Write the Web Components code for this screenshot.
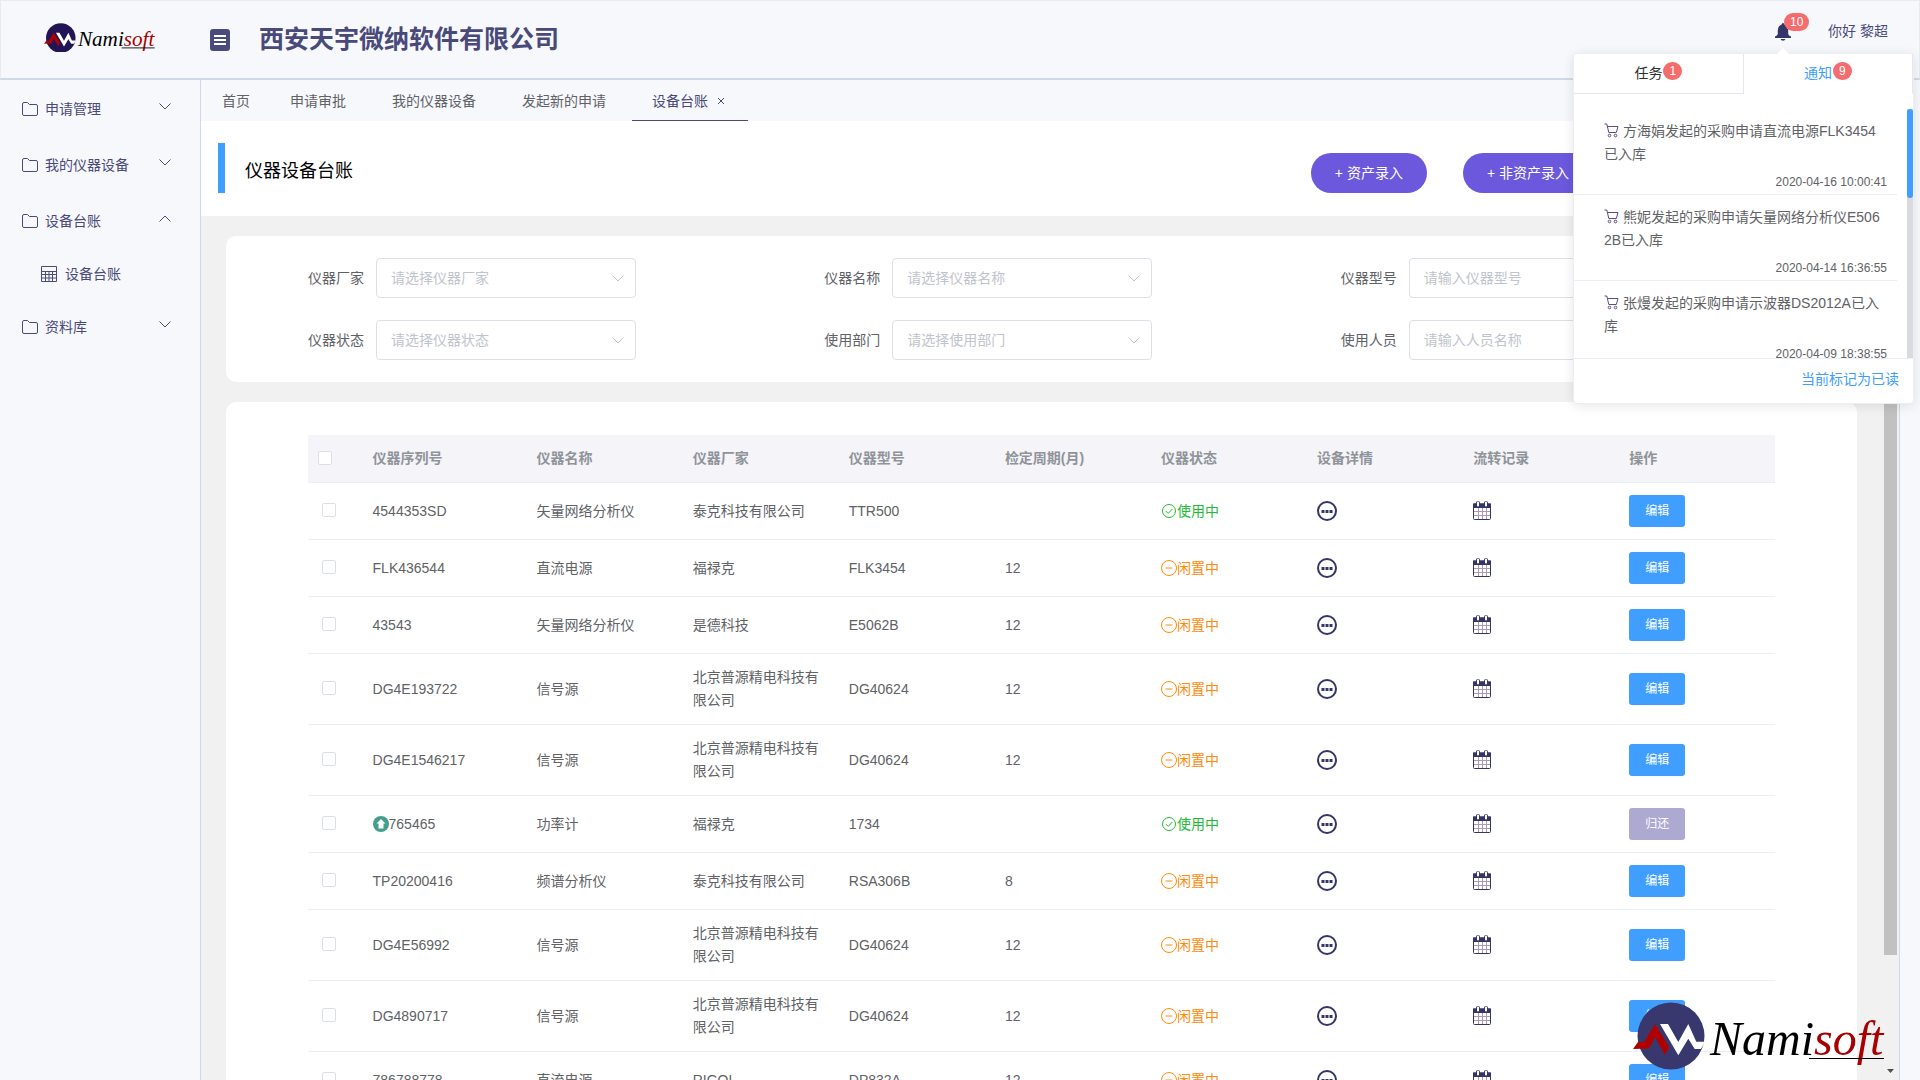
<!DOCTYPE html>
<html lang="zh-CN">
<head>
<meta charset="utf-8">
<title>仪器设备台账</title>
<style>
    body {
        margin: 0;
        height: 100vh;
        overflow: hidden;
        background: #f7f8fc;
        color: #606266;
        font: 14px/23px "Liberation Sans", Arial, "Noto Sans CJK SC", sans-serif;
    }
</style>
</head>
<body>

<app-shell>
    <app-header slot="header" company="西安天宇微纳软件有限公司" user="你好 黎超"></app-header>
    <side-menu slot="menu"></side-menu>
    <page-tabs slot="tabs"></page-tabs>
    <page-title heading="仪器设备台账">
        <pill-button>+ 资产录入</pill-button>
        <pill-button>+ 非资产录入</pill-button>
    </page-title>
    <panel-card>
        <filter-form></filter-form>
    </panel-card>
    <panel-card>
        <device-table></device-table>
    </panel-card>
    <nami-logo slot="mark" class="mark"></nami-logo>
</app-shell>

<script>
const icons = {
    folder: '<svg width="16" height="14" viewBox="0 0 16 14" fill="none" stroke="currentColor"><path d="M.5 12V2Q.5.5 2 .5H5.5L7.5 2.500H14Q15.500 2.500 15.500 4V12Q15.500 13.500 14 13.500H2Q.5 13.500.5 12Z"/></svg>',
    sheet: '<svg width="16" height="16" viewBox="0 0 16 16" fill="none" stroke="currentColor"><path d="M.5.5H15.500V15.500H.5ZM.5 5.500H15.500M.5 8.500H15.500M.5 12H15.500M4.500 5.500V15.500M8 5.500V15.500M11.500 5.500V15.500"/></svg>',
    down: '<svg width="12" height="7" viewBox="0 0 12 7" fill="none" stroke="currentColor"><path d="M.5.5 6 6 11.500.5"/></svg>',
    up: '<svg width="12" height="7" viewBox="0 0 12 7" fill="none" stroke="currentColor"><path d="M.5 6.500 6 1 11.500 6.500"/></svg>',
    menu: '<svg width="20" height="22" viewBox="0 0 20 22"><rect width="20" height="22" rx="3" fill="#4a4b7c"/><path d="M4 7H16M4 11H16M4 15H16" stroke="#fff" stroke-width="2"/></svg>',
    bell: '<svg width="16" height="18" viewBox="0 0 16 18" fill="#34356b"><path d="M8 0Q9.300 0 9.300 1.500 13 2.600 13.200 7V11Q13.500 12.500 16 13.500V15H0V13.500Q2.500 12.500 2.800 11V7Q3 2.600 6.700 1.500 6.700 0 8 0ZM5.500 16H10.500Q9.800 17.800 8 17.800 6.200 17.800 5.500 16Z"/></svg>',
    cart: '<svg width="15" height="15" viewBox="0 0 15 15" fill="none" stroke="#5d4a86"><path d="M.5 1H2.800L4.800 9.500H12.300L14 3.500H3.500"/><circle cx="5.500" cy="12.500" r="1.300"/><circle cx="11.500" cy="12.500" r="1.300"/></svg>',
    ok: '<svg width="16" height="16" viewBox="0 0 16 16" fill="none" stroke="currentColor"><circle cx="8" cy="8" r="6.500"/><path d="M4.800 8 7.200 10.400 11.400 6"/></svg>',
    idle: '<svg width="16" height="16" viewBox="0 0 16 16" fill="none" stroke="currentColor"><circle cx="8" cy="8" r="7.500"/><path d="M4.500 8H11.500"/></svg>',
    more: '<svg width="20" height="20" viewBox="0 0 20 20"><circle cx="10" cy="10" r="9" fill="#fff" stroke="#34356b" stroke-width="2"/><path d="M4.500 10.500H15.500" stroke="#34356b" stroke-width="3" stroke-dasharray="3 1"/></svg>',
    calendar: '<svg width="18" height="20" viewBox="0 0 18 20" fill="none" stroke="#34356b"><path d="M.5 3H17.500V17.500Q17.500 18.500 16.500 18.500H1.500Q.5 18.500.5 17.500Z" fill="#fff"/><path d="M0 2.500H18V7H0Z" fill="#34356b" stroke="none"/><path d="M1 10.500H17M1 14.500H17M5.500 7V18M9.500 7V18M13.500 7V18" stroke="#a99bb5"/><path d="M5 2V4.500M13 2V4.500" stroke-width="4" stroke-linecap="round"/><path d="M5 1.500V4.500M13 1.500V4.500" stroke="#fff" stroke-width="2" stroke-linecap="round"/></svg>',
    rise: '<svg width="16" height="16" viewBox="0 0 16 16"><circle cx="8" cy="8" r="8" fill="#439e8b"/><path d="M8 3 12.500 7.500H10.500V12.500H5.500V7.500H3.500Z" fill="#fff"/></svg>'
};

// shared base: clones a template into an open shadow root
class BaseElement extends HTMLElement {
    constructor() {
        super();
        this.attachShadow({ mode: 'open' });
    }

    connectedCallback() {
        const template = document.createElement('template');
        template.innerHTML = this.render();
        this.shadowRoot.replaceChildren(template.content.cloneNode(true));
    }
}

class AppShell extends BaseElement {
    render() {
        return `
<style>
    :host {
        display: grid;
        grid-template: auto 1fr / 200px 1fr;
        height: 100vh;
        overflow: hidden;
    }
    slot[name="header"] {
        display: block;
        grid-column: 1 / -1;
    }
    .body {
        display: flex;
        flex-direction: column;
        min-width: 0;
        min-height: 0;
        margin-right: 20px;
        border: solid #d1d9e8;
        border-width: 0 1px;
    }
    .view {
        display: flex;
        flex: 1;
        min-height: 0;
        background: #f1f1f1;
    }
    .content {
        display: flex;
        flex: 1;
        flex-direction: column;
        gap: 20px;
        min-width: 0;
        overflow: hidden;
    }
    ::slotted(.mark) {
        position: fixed;
        right: 33px;
        bottom: 10px;
        width: 254px;
    }
</style>
<slot name="header"></slot>
<slot name="menu"></slot>
<div class="body">
    <slot name="tabs"></slot>
    <div class="view">
        <div class="content"><slot></slot></div>
        <scroll-rail></scroll-rail>
    </div>
</div>
<slot name="mark"></slot>`;
    }
}

class ScrollRail extends BaseElement {
    render() {
        return `
<style>
    :host {
        display: flex;
        flex-direction: column;
        align-items: center;
        width: 17px;
    }
    .thumb {
        flex: 1;
        width: 13px;
        margin-top: 17px;
        background: #c1c1c1;
    }
    .rest {
        display: flex;
        align-items: flex-end;
        height: 13%;
        padding-bottom: 7px;
        box-sizing: border-box;
    }
    svg {
        display: block;
    }
</style>
<div class="thumb"></div>
<div class="rest"><svg width="7" height="4"><path d="M0 0H7L3.500 4Z" fill="#505050"/></svg></div>`;
    }
}

class NamiLogo extends BaseElement {
    render() {
        return `
<style>
    :host {
        display: block;
    }
    svg {
        display: block;
        width: 100%;
    }
    text {
        font: italic 48px "Liberation Serif", "Times New Roman", serif;
    }
</style>
<svg viewBox="0 0 254 68" role="img" aria-label="Namisoft">
    <circle cx="38" cy="34" r="33.500" fill="var(--disc, #38386e)"/>
    <path d="M0 47 5 40H11L22 22 36 45 32 53 22 35 16 46.500Z" fill="#b00000"/>
    <path d="M27 22H35L45.300 40 55.300 22 63.300 39.700H72L68 47H61.700L55.300 36.700 45.300 53.300Z" fill="#fff"/>
    <text x="77" y="53">Nami<tspan fill="#a80000">soft</tspan></text>
    <path d="M176 56.500H251" stroke="#000" stroke-width="var(--rule, 1)"/>
</svg>`;
    }
}

class AppHeader extends BaseElement {
    render() {
        return `
<style>
    :host {
        display: flex;
        align-items: center;
        position: relative;
        height: 80px;
        box-sizing: border-box;
        padding-left: 43px;
        border: 1px solid #e6ebf5;
        border-bottom: 2px solid #d1d9e8;
        background: #f7f8fc;
        color: #494a7a;
    }
    nami-logo {
        width: 112px;
        margin-bottom: 4px;
        --disc: #231555;
        --rule: 2;
    }
    button {
        border: 0;
        padding: 0;
        background: none;
        font: inherit;
        cursor: pointer;
    }
    .toggle {
        margin: 0 29px 0 54px;
        line-height: 0;
    }
    h1 {
        flex: 1;
        margin: 0 0 2px;
        font-size: 25px;
        line-height: 36px;
    }
    .user {
        display: flex;
        align-items: center;
        gap: 37px;
        margin: 0 31px 16px 0;
    }
    .bell {
        position: relative;
        display: flex;
    }
    .bell count-badge {
        position: absolute;
        left: 9px;
        bottom: 10px;
    }
    notice-popover {
        position: absolute;
        top: 52px;
        right: 5px;
        z-index: 5;
    }
</style>
<nami-logo></nami-logo>
<button class="toggle" aria-label="折叠菜单">${icons.menu}</button>
<h1>${this.getAttribute('company')}</h1>
<div class="user">
    <button class="bell" aria-label="消息">${icons.bell}<count-badge>10</count-badge></button>
    <span>${this.getAttribute('user')}</span>
</div>
<notice-popover></notice-popover>`;
    }
}

class CountBadge extends BaseElement {
    render() {
        return `
<style>
    :host {
        display: inline-block;
        box-sizing: border-box;
        min-width: 18px;
        padding: 0 6px;
        border-radius: 9px;
        background: #f56c6c;
        color: #fff;
        font-size: 12px;
        line-height: 18px;
        text-align: center;
    }
</style>
<slot></slot>`;
    }
}

class NoticePopover extends BaseElement {
    render() {
        const notices = [
            ['方海娟发起的采购申请直流电源FLK3454已入库', '2020-04-16 10:00:41'],
            ['熊妮发起的采购申请矢量网络分析仪E5062B已入库', '2020-04-14 16:36:55'],
            ['张熳发起的采购申请示波器DS2012A已入库', '2020-04-09 18:38:55']
        ];
        return `
<style>
    :host {
        display: block;
        box-sizing: border-box;
        width: 341px;
        border: 1px solid #ebeef5;
        border-radius: 4px;
        background: #fff;
        box-shadow: 0 2px 12px rgba(0,0,0,0.1);
        color: #606266;
    }
    .arrow {
        position: absolute;
        top: -6px;
        left: 203px;
        display: block;
    }
    .tabs {
        display: flex;
    }
    .tabs button {
        display: flex;
        flex: 1;
        align-items: center;
        justify-content: center;
        height: 40px;
        padding: 0;
        border: solid #e4e7ed;
        border-width: 0 1px 1px 0;
        background: none;
        color: #303133;
        font: inherit;
    }
    .tabs button.active {
        border-bottom-color: transparent;
        color: #409eff;
    }
    .tabs count-badge {
        margin: 0 0 6px 1px;
    }
    .list {
        display: flex;
        gap: 10px;
        height: 249px;
        margin-top: 15px;
        overflow: hidden;
    }
    ul {
        flex: 1;
        margin: 0;
        padding: 0;
        list-style: none;
    }
    li {
        padding: 11px 10px 0 30px;
        border-bottom: 1px solid #ebeef5;
        word-break: break-all;
    }
    li svg {
        margin-right: 4px;
        vertical-align: -2px;
    }
    time {
        display: block;
        margin-top: 5px;
        font-size: 12px;
        text-align: right;
    }
    .rail {
        width: 6px;
        background: #d8dadd;
    }
    .rail i {
        display: block;
        height: 89px;
        border-radius: 3px;
        background: #409eff;
    }
    footer {
        padding: 9px 14px 12px;
        border-top: 1px solid #ebeef5;
        text-align: right;
    }
    a {
        color: #409eff;
        text-decoration: none;
    }
</style>
<svg class="arrow" width="12" height="6"><path d="M0 6 6 0 12 6Z" fill="#fff"/></svg>
<div class="tabs">
    <button>任务<count-badge>1</count-badge></button>
    <button class="active">通知<count-badge>9</count-badge></button>
</div>
<div class="list">
    <ul>
        ${notices.map(([text, time]) => `<li>${icons.cart}${text}<time>${time}</time></li>`).join('')}
    </ul>
    <div class="rail"><i></i></div>
</div>
<footer><a href="#">当前标记为已读</a></footer>`;
    }
}

class SideMenu extends BaseElement {
    render() {
        const item = (label, arrow = 'down') => `
<a href="#">${icons.folder}<span>${label}</span>${icons[arrow]}</a>`;
        return `
<style>
    :host {
        display: block;
        padding-top: 1px;
        background: #f7f8fc;
    }
    a {
        display: flex;
        align-items: center;
        gap: 7px;
        height: 56px;
        padding: 0 29px 0 22px;
        color: #494a7a;
        text-decoration: none;
    }
    span {
        flex: 1;
    }
    a > svg:last-child {
        margin-bottom: 6px;
    }
    .sub {
        gap: 8px;
        height: 50px;
        padding-left: 41px;
    }
</style>
<nav>
    ${item('申请管理')}
    ${item('我的仪器设备')}
    ${item('设备台账', 'up')}
    <a class="sub" href="#">${icons.sheet}<span>设备台账</span></a>
    ${item('资料库')}
</nav>`;
    }
}

class PageTabs extends BaseElement {
    render() {
        return `
<style>
    :host {
        display: flex;
        height: 41px;
        padding-left: 1px;
        background: #f7f8fc;
    }
    a {
        display: flex;
        align-items: center;
        padding: 2px 20px 0;
        box-sizing: border-box;
        color: #606266;
        text-decoration: none;
    }
    .closable {
        padding-right: 26px;
    }
    .active {
        gap: 6px;
        border-bottom: 1px solid #494a7a;
        color: #494a7a;
    }
    svg {
        margin: 0 3px;
    }
</style>
<a href="#">首页</a>
<a href="#" class="closable">申请审批</a>
<a href="#" class="closable">我的仪器设备</a>
<a href="#" class="closable">发起新的申请</a>
<a href="#" class="active">设备台账<svg width="8" height="8" viewBox="0 0 8 8" stroke="currentColor"><path d="M1 1 7 7M7 1 1 7"/></svg></a>`;
    }
}

class PageTitle extends BaseElement {
    render() {
        return `
<style>
    :host {
        display: flex;
        align-items: flex-end;
        gap: 36px;
        flex: none;
        height: 95px;
        box-sizing: border-box;
        padding: 0 289px 23px 17px;
        background: #fff;
    }
    h2 {
        flex: 1;
        margin: 0;
        padding: 6px 0 0 20px;
        border-left: 7px solid #409eff;
        color: #000;
        font-size: 18px;
        font-weight: normal;
        line-height: 44px;
    }
</style>
<h2>${this.getAttribute('heading')}</h2>
<slot></slot>`;
    }
}

class PillButton extends BaseElement {
    render() {
        return `
<style>
    :host {
        display: block;
    }
    button {
        display: block;
        height: 40px;
        padding: 0 24px;
        border: 0;
        border-radius: 20px;
        background: #6b58dd;
        color: #fff;
        font: inherit;
    }
</style>
<button><slot></slot></button>`;
    }
}

class PanelCard extends BaseElement {
    render() {
        return `
<style>
    :host {
        display: block;
        flex: none;
        margin: 0 25px;
        border-radius: 10px;
        background: #fff;
    }
</style>
<slot></slot>`;
    }
}

class FilterForm extends BaseElement {
    render() {
        const fields = [
            ['select', '仪器厂家', '请选择仪器厂家'],
            ['select', '仪器名称', '请选择仪器名称'],
            ['input', '仪器型号', '请输入仪器型号'],
            ['select', '仪器状态', '请选择仪器状态'],
            ['select', '使用部门', '请选择使用部门'],
            ['input', '使用人员', '请输入人员名称']
        ];
        const control = (type, id, hint) => type === 'select'
            ? `<div class="select"><select id="${id}"><option>${hint}</option></select>${icons.down}</div>`
            : `<input id="${id}" type="text" placeholder="${hint}">`;
        return `
<style>
    :host {
        display: block;
        padding: 22px 41px;
    }
    form {
        display: grid;
        grid-template-columns: repeat(3, 1fr);
        row-gap: 22px;
    }
    .field {
        display: flex;
        align-items: center;
        gap: 12px;
        padding-left: 41px;
    }
    select, input {
        appearance: none;
        box-sizing: border-box;
        width: 260px;
        height: 40px;
        padding: 0 14px;
        border: 1px solid #dcdfe6;
        border-radius: 4px;
        background: #fff;
        color: #c0c4cc;
        font: inherit;
    }
    input::placeholder {
        color: #c0c4cc;
    }
    .select {
        display: grid;
        align-items: center;
    }
    .select > * {
        grid-area: 1 / 1;
    }
    .select svg {
        justify-self: end;
        margin-right: 12px;
        color: #c0c4cc;
        pointer-events: none;
    }
</style>
<form>
    ${fields.map(([type, label, hint], i) => `
    <div class="field"><label for="f${i}">${label}</label>${control(type, `f${i}`, hint)}</div>`).join('')}
</form>`;
    }
}

class DeviceTable extends BaseElement {
    render() {
        const heads = ['仪器序列号', '仪器名称', '仪器厂家', '仪器型号', '检定周期(月)', '仪器状态', '设备详情', '流转记录', '操作'];
        // serial, name, maker, model, cycle, in use, lent out
        const rows = [
            ['4544353SD', '矢量网络分析仪', '泰克科技有限公司', 'TTR500', '', true],
            ['FLK436544', '直流电源', '福禄克', 'FLK3454', '12'],
            ['43543', '矢量网络分析仪', '是德科技', 'E5062B', '12'],
            ['DG4E193722', '信号源', '北京普源精电科技有限公司', 'DG40624', '12'],
            ['DG4E1546217', '信号源', '北京普源精电科技有限公司', 'DG40624', '12'],
            ['765465', '功率计', '福禄克', '1734', '', true, true],
            ['TP20200416', '频谱分析仪', '泰克科技有限公司', 'RSA306B', '8'],
            ['DG4E56992', '信号源', '北京普源精电科技有限公司', 'DG40624', '12'],
            ['DG4890717', '信号源', '北京普源精电科技有限公司', 'DG40624', '12'],
            ['786788778', '直流电源', 'RIGOL', 'DP832A', '12']
        ];
        const row = ([serial, name, maker, model, cycle, used, lent]) => `
<tr>
    <td class="pick"><input type="checkbox" aria-label="选择 ${serial}"></td>
    <td><span class="icon-text">${lent ? icons.rise : ''}${serial}</span></td>
    <td>${name}</td>
    <td>${maker}</td>
    <td>${model}</td>
    <td>${cycle}</td>
    <td><span class="icon-text ${used ? 'used' : 'idle'}">${used ? icons.ok : icons.idle}${used ? '使用中' : '闲置中'}</span></td>
    <td><button class="icon" aria-label="设备详情">${icons.more}</button></td>
    <td><button class="icon" aria-label="流转记录">${icons.calendar}</button></td>
    <td><button class="action ${lent ? 'return' : ''}">${lent ? '归还' : '编辑'}</button></td>
</tr>`;
        return `
<style>
    :host {
        display: block;
        padding: 33px 5%;
    }
    table {
        width: 100%;
        border-spacing: 0;
        table-layout: fixed;
    }
    th, td {
        padding: 12px 10px;
        border-bottom: 1px solid #ebeef5;
        text-align: left;
        word-break: break-all;
    }
    th {
        background: #f4f4f9;
        color: #909399;
    }
    th:first-child {
        width: 35px;
    }
    th:nth-child(2) {
        width: 144px;
    }
    .pick {
        padding-left: 14px;
    }
    input {
        appearance: none;
        display: block;
        width: 14px;
        height: 14px;
        box-sizing: border-box;
        margin: 0 0 2px;
        border: 1px solid #dcdfe6;
        border-radius: 2px;
        background: #fff;
    }
    .icon-text {
        display: flex;
        align-items: center;
    }
    .used {
        color: #22bb33;
    }
    .idle {
        color: #ff8a0c;
    }
    button {
        display: block;
        border: 0;
        font: inherit;
    }
    .icon {
        padding: 0;
        background: none;
        line-height: 0;
    }
    .action {
        height: 32px;
        padding: 1px 16px 0;
        border-radius: 3px;
        background: #409eff;
        color: #fff;
        font-size: 12px;
    }
    .return {
        background: #ada9d0;
    }
</style>
<table>
    <thead><tr><th><input type="checkbox" aria-label="全选"></th>${heads.map(h => `<th>${h}</th>`).join('')}</tr></thead>
    <tbody>${rows.map(row).join('')}</tbody>
</table>`;
    }
}

customElements.define('app-shell', AppShell);
customElements.define('scroll-rail', ScrollRail);
customElements.define('nami-logo', NamiLogo);
customElements.define('app-header', AppHeader);
customElements.define('count-badge', CountBadge);
customElements.define('notice-popover', NoticePopover);
customElements.define('side-menu', SideMenu);
customElements.define('page-tabs', PageTabs);
customElements.define('page-title', PageTitle);
customElements.define('pill-button', PillButton);
customElements.define('panel-card', PanelCard);
customElements.define('filter-form', FilterForm);
customElements.define('device-table', DeviceTable);
</script>
</body>
</html>
